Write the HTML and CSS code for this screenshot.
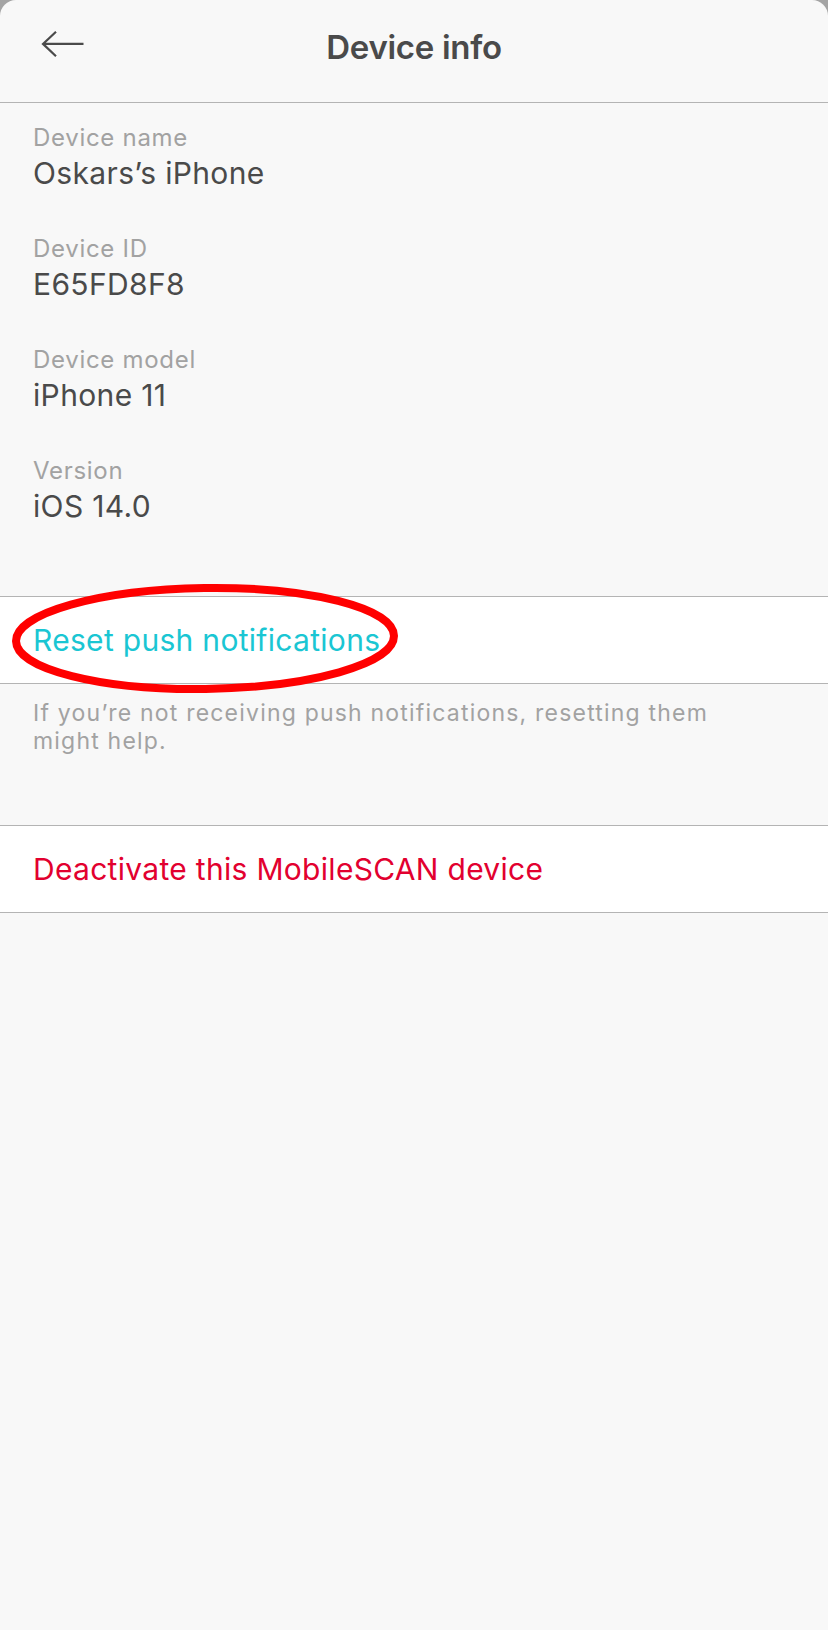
FILE: index.html
```html
<!DOCTYPE html>
<html lang="en">
<head>
  <meta charset="UTF-8">
  <meta name="viewport" content="width=device-width, initial-scale=1.0">
  <title>Device info</title>
  <link rel="stylesheet" href="styles.css">
</head>
<body>
  <div class="screen">

    <!-- Navigation bar -->
    <div class="navbar">
      <button class="back" aria-label="Back">
        <svg width="44" height="28" viewBox="0 0 44 28">
          <path d="M15 1.7 L2 13.9 L15 26.2 M2 13.9 H42.5" fill="none" stroke="#4a4a4a" stroke-width="2.2"/>
        </svg>
      </button>
      <h1 class="title">Device info</h1>
      <span></span>
    </div>

    <!-- Device details -->
    <div class="details">
      <div class="field">
        <div class="label">Device name</div>
        <div class="value">Oskars’s iPhone</div>
      </div>
      <div class="field">
        <div class="label">Device ID</div>
        <div class="value">E65FD8F8</div>
      </div>
      <div class="field">
        <div class="label">Device model</div>
        <div class="value">iPhone 11</div>
      </div>
      <div class="field">
        <div class="label">Version</div>
        <div class="value">iOS 14.0</div>
      </div>
    </div>

    <div class="row row-reset">
      <span class="link">Reset push notifications</span>
      <svg class="circle" width="420" height="120" viewBox="0 0 420 120">
        <ellipse cx="205" cy="57.5" rx="189" ry="50.5" fill="none" stroke="#ff0000" stroke-width="8" transform="rotate(-0.8 205 57.5)"/>
      </svg>
    </div>
    <p class="hint">If you’re not receiving push notifications, resetting them might help.</p>

    <div class="row">
      <span class="danger">Deactivate this MobileSCAN device</span>
    </div>

  </div>
</body>
</html>
```

FILE: styles.css
```css
html { background: #a4a4a4; }
body { margin: 0; padding: 0; font-family: Inter, "Noto Sans", sans-serif; }
.screen { background: #f8f8f8; min-height: 1630px; border-radius: 16px 16px 0 0; overflow: hidden; }

.navbar { display: grid; grid-template-columns: 1fr auto 1fr; align-items: start; height: 102px; border-bottom: 1px solid #b4b4b4; }
.back { justify-self: start; margin: 30px 0 0 41px; padding: 0; border: none; background: none; width: 44px; height: 28px; cursor: pointer; }
.back svg { display: block; }
.title { margin: 27px 0 0; font-size: 33px; line-height: 40px; font-weight: 600; color: #4a4a4a; letter-spacing: -0.3px; }

.details { display: flex; flex-direction: column; gap: 41px; padding: 20px 33px 70px; }
.label { font-size: 24px; line-height: 30px; color: #a2a2a2; letter-spacing: 0.7px; }
.value { font-size: 30px; line-height: 40px; color: #4a4a4a; letter-spacing: 0.35px; }

.row { position: relative; display: flex; align-items: center; height: 86px; padding: 0 33px; background: #fff; border-top: 1px solid #b4b4b4; border-bottom: 1px solid #b4b4b4; font-size: 30px; letter-spacing: 0.3px; }
.link { color: #1ac6d3; }
.danger { color: #e2002f; }
.circle { position: absolute; left: 0; top: -16px; pointer-events: none; }

.hint { margin: 0; padding: 15px 70px 70px 33px; font-size: 23px; line-height: 28px; color: #a2a2a2; letter-spacing: 1.2px; }
```
